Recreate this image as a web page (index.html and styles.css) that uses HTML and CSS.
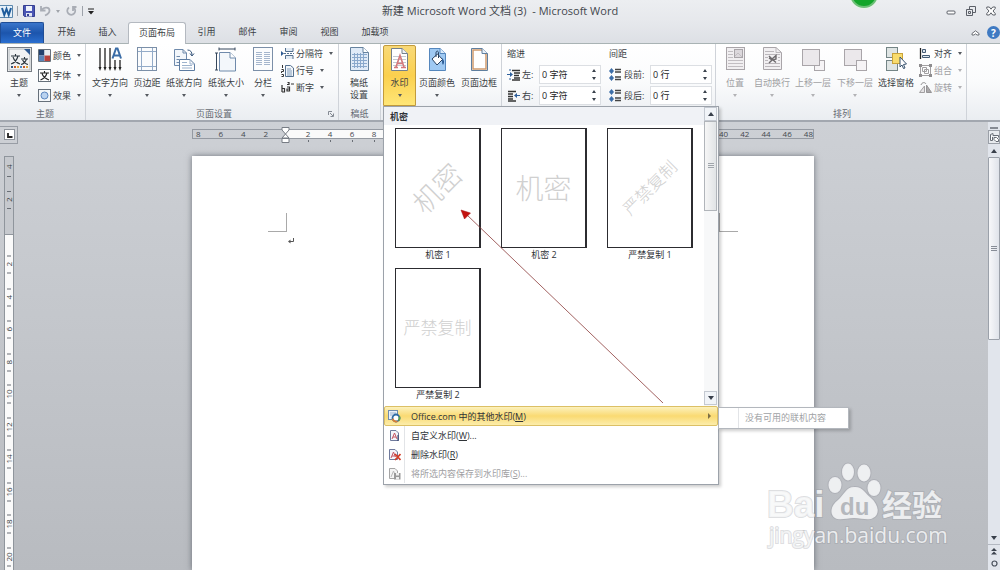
FILE: index.html
```html
<!DOCTYPE html>
<html lang="zh-CN">
<head>
<meta charset="utf-8">
<title>新建 Microsoft Word 文档 (3) - Microsoft Word</title>
<link rel="stylesheet" href="styles.css">
</head>
<body>
<header class="titlebar">
  <div class="quick">
    <svg class="logo" width="14" height="15" viewBox="0 0 14 15"><path d="M0 1.500H12.500V13.500H0" fill="#e6f0f9" stroke="#5b87ad"/><path d="M2 4L4.300 11L6.500 5L8.700 11L11 4" fill="none" stroke="#1f5c9c" stroke-width="2"/></svg>
    <i class="sep"></i>
    <button class="flat" aria-label="保存"><svg width="12" height="12" viewBox="0 0 12 12"><path d="M.5.5H11.500V11.500H1.500L.5 10.500Z" fill="#4a55b4" stroke="#353f91"/><path d="M3 1H9V6H3Z" fill="#eef2fb"/><path d="M3 8H9V11.500H3Z" fill="#dfe4f3"/><path d="M4 9H6V11H4Z" fill="#353f91"/></svg></button>
    <button class="flat" aria-label="撤消"><svg width="11" height="12" viewBox="0 0 11 12"><path d="M1 1V5.500H5.500M1.500 5C4 1.500 9.500 2 9.500 5.500C9.500 8 7.500 9.500 5 10.500" fill="none" stroke="#a9adb5" stroke-width="1.800"/></svg></button>
    <i class="caret dim"></i>
    <button class="flat" aria-label="恢复"><svg width="12" height="12" viewBox="0 0 12 12"><path d="M4 2.500A4 4 0 1 0 8.500 2.500M8 6V2H11.500" fill="none" stroke="#a9adb5" stroke-width="1.800"/></svg></button>
    <i class="sep"></i>
    <button class="flat" aria-label="自定义快速访问工具栏"><svg width="6" height="7" viewBox="0 0 6 7"><path d="M0 1H6" stroke="#222"/><path d="M0 3H6L3 6.500Z" fill="#222"/></svg></button>
  </div>
  <h1 class="title">新建 Microsoft Word 文档 (3) &nbsp;- Microsoft Word</h1>
  <i class="orb"></i>
  <div class="winctl">
    <button class="flat" aria-label="最小化"><svg width="10" height="10" viewBox="0 0 10 10"><rect x="1" y="5" width="8" height="3" rx="1" fill="#fff" stroke="#5c6068"/></svg></button>
    <button class="flat" aria-label="还原"><svg width="10" height="10" viewBox="0 0 10 10"><path d="M3.500 3V.5H9.500V6.500H7M.5 3.500H6.500V9.500H.5ZM2.500 5.500H4.500V7.500H2.500Z" fill="none" stroke="#5c6068"/></svg></button>
    <button class="flat" aria-label="关闭"><svg width="10" height="10" viewBox="0 0 10 10"><path d="M.8 1H3.300L5 3.200L6.700 1H9.200V2.500L7 5L9.200 7.500V9H6.700L5 6.800L3.300 9H.8V7.500L3 5L.8 2.500Z" fill="#fff" stroke="#5c6068"/></svg></button>
  </div>
</header>
<nav class="tabs">
  <button class="tab file">文件</button>
  <button class="tab">开始</button>
  <button class="tab">插入</button>
  <button class="tab active">页面布局</button>
  <button class="tab">引用</button>
  <button class="tab">邮件</button>
  <button class="tab">审阅</button>
  <button class="tab">视图</button>
  <button class="tab wide">加载项</button>
  <div class="tabtools">
    <button class="flat" aria-label="功能区最小化"><svg width="9" height="6" viewBox="0 0 9 6"><path d="M1 3.500L4.500 .8L8 3.500V5H6L4.500 3.800L3 5H1Z" fill="#fff" stroke="#5c6068" stroke-width=".9"/></svg></button>
    <button class="flat help" aria-label="帮助">?</button>
  </div>
</nav>

<div class="ribbon">
  <section class="group g-theme">
    <div class="tools">
      <button class="big narrow"><svg width="25" height="25" viewBox="0 0 25 25"><rect x=".5" y=".5" width="24" height="24" fill="#fff" stroke="#777d84"/><rect x="2" y="2" width="21" height="21" fill="#f1f3f4" stroke="#b2b7bb"/><path d="M17 2H23V8Z" fill="#2f5b93"/><path d="M4 9H13M8.500 7V9M11 9C10 13 7 16 4 17M6 10C7 13 10 16 13 17M14 12H21M17.500 10V12M19.500 12C18.500 15 16.500 17 14 17.500M15.500 13C17 15.500 18.500 17 21 17.500" fill="none" stroke="#29343c" stroke-width="1.100"/><path d="M4 20H6" stroke="#33557a" stroke-width="2"/><path d="M7 20H9M16 20H18" stroke="#c55a2b" stroke-width="2"/><path d="M10 20H12M19 20H21" stroke="#e0a43b" stroke-width="2"/><path d="M13 20H15" stroke="#4f87bd" stroke-width="2"/></svg><span>主题</span><i class="caret"></i></button>
      <div class="smalls loose">
        <button class="small"><svg width="13" height="13" viewBox="0 0 13 13"><path d="M.5 .5H12.500V12.500H.5Z" fill="#fff" stroke="#66707a"/><path d="M1 1H6.500V6.500H1Z" fill="#24416d"/><path d="M6.500 1H12V6.500H6.500Z" fill="#e8ebef"/><path d="M1 6.500H6.500V12H1Z" fill="#5a83b8"/><path d="M6.500 6.500H12V12H6.500Z" fill="#b8423c"/></svg><span>颜色</span><i class="caret"></i></button>
        <button class="small"><svg width="13" height="13" viewBox="0 0 13 13"><rect x=".5" y=".5" width="12" height="12" fill="#fff" stroke="#66707a"/><path d="M2 4H11M6.500 2V4M9 4C8 7.500 6 9.500 2.500 11M4 4.500C5 7.500 7 9.500 11 11" fill="none" stroke="#222" stroke-width="1.100"/></svg><span>字体</span><i class="caret"></i></button>
        <button class="small"><svg width="13" height="13" viewBox="0 0 13 13"><rect x=".5" y=".5" width="12" height="12" fill="#f4f7fa" stroke="#66707a"/><circle cx="6.500" cy="6.500" r="3.500" fill="#b9d2f0" stroke="#5b86bf"/></svg><span>效果</span><i class="caret"></i></button>
      </div>
    </div>
    <h2>主题</h2>
  </section>

  <section class="group g-setup">
    <div class="tools">
      <button class="big"><svg width="24" height="25" viewBox="0 0 24 25"><path d="M2 1V20M7 1V20M12 1V20M17 13V20M22 13V20" stroke="#222" stroke-width="1.300"/><path d="M.5 20H3.500L2 24ZM5.500 20H8.500L7 24ZM10.500 20H13.500L12 24ZM15.500 20H18.500L17 24ZM20.500 20H23.500L22 24Z" fill="#222"/><path d="M14.500 11.500L18 1.500H19.500L23 11.500M15.500 8.500H22" fill="none" stroke="#3a6ca6" stroke-width="2"/></svg><span>文字方向</span><i class="caret"></i></button>
      <button class="big w34"><svg width="20" height="25" viewBox="0 0 20 25"><rect x=".5" y=".5" width="19" height="23" fill="#fbfcfd" stroke="#7b8fa8"/><path d="M4.500 1V23M15.500 1V23M1 4.500H19M1 19.500H19" stroke="#93abc8"/></svg><span>页边距</span><i class="caret"></i></button>
      <button class="big"><svg width="24" height="25" viewBox="0 0 24 25"><path d="M2.500 2.500H11L14.500 6V18.500H2.500Z" fill="#f3f7fb" stroke="#6f8aab"/><path d="M11 2.500V6H14.500M4.500 9.500H8M4.500 12.500H7M4.500 15.500H7" fill="none" stroke="#6f8aab"/><path d="M7.500 12.500H18L22.500 17V23.500H7.500Z" fill="#fff" stroke="#5c7ba0"/><path d="M18 12.500V17H22.500M10 15.500H15M10 18.500H20M10 21H20" fill="none" stroke="#9db3cd"/><path d="M15.500 3C18.500 3 20 5 20 8M18 6.500L20 9L22 6.500" fill="none" stroke="#35547a"/></svg><span>纸张方向</span><i class="caret"></i></button>
      <button class="big w44"><svg width="22" height="25" viewBox="0 0 22 25"><path d="M4.500 5.500H15L20.500 11V24H4.500Z" fill="#f3f7fb" stroke="#6f8aab"/><path d="M15 5.500V11H20.500" fill="#fff" stroke="#6f8aab"/><path d="M4 2H20M4 .5V3.500M20 .5V3.500M1.500 6V23M0 6H3M0 23H3" stroke="#35475c"/></svg><span>纸张大小</span><i class="caret"></i></button>
      <button class="big w30"><svg width="20" height="25" viewBox="0 0 20 25"><rect x=".5" y=".5" width="19" height="23" fill="#fbfcfd" stroke="#7b8fa8"/><path d="M3 5.500H9M11 5.500H17M3 7.500H9M11 7.500H17M3 9.500H9M11 9.500H17M3 11.500H9M11 11.500H17M3 13.500H9M11 13.500H17M3 15.500H9M11 15.500H17M3 17.500H9M11 17.500H17" stroke="#a5b6cd"/></svg><span>分栏</span><i class="caret"></i></button>
      <div class="smalls">
        <button class="small"><svg width="13" height="13" viewBox="0 0 13 13"><path d="M4.500 1V4.500H12V1M4.500 12V8.500H12V12" fill="#e3ebf4" stroke="#54708f"/><path d="M3 6.500H13" stroke="#54708f" stroke-dasharray="2 1"/><path d="M0 4L3 6.500L0 9Z" fill="#2f5b93"/></svg><span>分隔符</span><i class="caret"></i></button>
        <button class="small"><svg width="13" height="13" viewBox="0 0 13 13"><path d="M4.500 1.500H9.500L12.500 4V12.500H4.500Z" fill="#f1f5f9" stroke="#54708f"/><path d="M6 5H10M6 7H11M6 9H11M6 11H11" stroke="#809bb9"/><path d="M1.500 1V4M.5 5.500H2.500V7.500H.5V9M.5 10.500H2.500V12.500H.5" fill="none" stroke="#333"/></svg><span>行号</span><i class="caret"></i></button>
        <button class="small"><svg width="13" height="13" viewBox="0 0 13 13"><path d="M1 4V11M1 7.500H3.500V11H1M6 3.500H8V1.500H6.500M6 6H8.500V10H6V8H8M10 3H13" fill="none" stroke="#333" stroke-width="1.200"/></svg><span>断字</span><i class="caret"></i></button>
      </div>
    </div>
    <h2>页面设置</h2>
    <svg class="launcher" width="6" height="6" viewBox="0 0 6 6"><path d="M.5 4V.5H4M2 2L5 5M5.500 2.500V5.500H2.500" fill="none" stroke="#858b94"/></svg>
  </section>

  <section class="group g-grid">
    <div class="tools">
      <button class="big"><svg width="19" height="25" viewBox="0 0 19 25"><path d="M.5 .5H13L18.500 5.500V23.500H.5Z" fill="#dfeaf7" stroke="#66839f"/><path d="M13 .5V5.500H18.500" fill="#fff" stroke="#66839f"/><path d="M2 7.500H17M2 10.500H17M2 13.500H17M2 16.500H17M2 19.500H17M4.500 6V21M7.500 6V21M10.500 6V21M13.500 6V21" stroke="#89a8cc"/></svg><span>稿纸<br>设置</span></button>
    </div>
    <h2>稿纸</h2>
  </section>

  <section class="group g-bg">
    <div class="tools">
      <div class="wm">
        <button class="big pressed"><svg width="19" height="25" viewBox="0 0 19 25"><path d="M1.500 1.500H12L17.500 6.500V23.500H1.500Z" fill="#fff" stroke="#74808c"/><path d="M12 1.500V6.500H17.500" fill="#eef1f5" stroke="#74808c"/><path d="M3 9.500H16M3 12.500H16M3 15.500H16M3 18.500H16" stroke="#c3cad2"/><path d="M4 20.500H8M11 20.500H16M6 20L10 8.500L14 20M7.500 16.500H13" fill="none" stroke="#d5787c" stroke-width="1.600"/></svg><span>水印</span><i class="caret"></i></button>
        <div class="panel">
          <div class="gallery">
            <div class="gal-main">
              <h3>机密</h3>
              <div class="thumbs">
                <button class="thumb"><span class="sheet"><em class="diag">机密</em></span><span>机密 1</span></button>
                <button class="thumb"><span class="sheet"><em>机密</em></span><span>机密 2</span></button>
                <button class="thumb"><span class="sheet"><em class="diag small-mark">严禁复制</em></span><span>严禁复制 1</span></button>
                <button class="thumb"><span class="sheet"><em class="small-mark">严禁复制</em></span><span>严禁复制 2</span></button>
              </div>
            </div>
            <div class="gal-scroll">
              <button class="sbtn" aria-label="向上"><i class="up"></i></button>
              <div class="sthumb"></div>
              <button class="sbtn end" aria-label="向下"><i class="down"></i></button>
            </div>
          </div>
          <ul class="menu">
            <li class="hot"><button><svg width="13" height="13" viewBox="0 0 13 13"><rect x=".5" y=".5" width="9" height="9" fill="#eaf1f9" stroke="#6e8cae"/><path d="M2 3H8M2 5H5" stroke="#9bb3cf"/><circle cx="8" cy="8" r="3.500" fill="#fff" stroke="#2d6aa3" stroke-width="1.800"/><path d="M4.600 8.800A3.500 3.500 0 0 0 9.500 11.200" fill="none" stroke="#d97f31" stroke-width="1.800"/><path d="M11.200 6.500A3.500 3.500 0 0 1 10.500 10.500" fill="none" stroke="#5d9e4a" stroke-width="1.800"/></svg><span>Office.com 中的其他水印(<u>M</u>)</span><i class="right"></i></button>
              <div class="submenu"><span>没有可用的联机内容</span></div></li>
            <li><button><svg width="13" height="13" viewBox="0 0 13 13"><path d="M2.500 1.500H8L10.500 4V11.500H2.500Z" fill="#f3f4fa" stroke="#6f7a9c"/><path d="M4 10L6.500 4L9 10M5 8H8" fill="none" stroke="#c65563"/><path d="M10 6V12" stroke="#2c3d6b"/></svg><span>自定义水印(<u>W</u>)...</span></button></li>
            <li><button><svg width="13" height="13" viewBox="0 0 13 13"><path d="M1.500 1.500H7L9.500 4V11.500H1.500Z" fill="#f3f4fa" stroke="#6f7a9c"/><path d="M3 10L5.500 4L7.500 9M4 8H7" fill="none" stroke="#c65563"/><path d="M7 6L12.500 12M12.500 6L7 12" stroke="#d23b26" stroke-width="1.700"/></svg><span>删除水印(<u>R</u>)</span></button></li>
            <li><button disabled><svg width="13" height="13" viewBox="0 0 13 13"><path d="M1.500 1.500H7L9.500 4V11.500H1.500Z" fill="#f4f4f4" stroke="#a5a5a5"/><path d="M3 10L5.500 4L7.500 9" fill="none" stroke="#b8b8b8"/><path d="M6 6H12.500V12.500H6Z" fill="#999"/><path d="M8 6H11V8.500H8ZM8 10H11V12.500H8Z" fill="#eee"/></svg><span>将所选内容保存到水印库(<u>S</u>)...</span></button></li>
          </ul>
          <svg class="pointer" width="290" height="300" viewBox="0 0 290 300"><path d="M279 296L82 107" stroke="#8a3a38" stroke-width=".8" fill="none"/><path d="M77 103L86.500 106L80.500 112Z" fill="#c4130f" stroke="#a01010" stroke-width=".5"/></svg>
        </div>
      </div>
      <button class="big"><svg width="19" height="25" viewBox="0 0 19 25"><path d="M1.500 1.500H12L17.500 6.500V23.500H1.500Z" fill="#9fc9f2" stroke="#5587bd"/><path d="M12 1.500V6.500H17.500" fill="#dcecfb" stroke="#5587bd"/><path d="M4 12L9.500 7L14.500 12.500L9 18Z" fill="#fff" stroke="#2a4362"/><path d="M8 10V6C8 3.500 10.500 3.500 10.500 6V11" fill="none" stroke="#2a4362"/><path d="M14 11C16.500 13 16.500 16 15 18C13.500 16 14.500 14 14 11Z" fill="#23548f"/></svg><span>页面颜色</span><i class="caret"></i></button>
      <button class="big w44"><svg width="19" height="25" viewBox="0 0 19 25"><path d="M1.500 1.500H12L17.500 6.500V23.500H1.500Z" fill="#fff" stroke="#5f7f9f"/><path d="M3 3H11.500L16 7.500V22H3Z" fill="#fff" stroke="#cf9b6d" stroke-width="1.500"/><path d="M12 1.500V6.500H17.500" fill="#e8f0f8" stroke="#5f7f9f"/></svg><span>页面边框</span></button>
    </div>
  </section>

  <section class="group g-para">
    <div class="paracol">
      <h4>缩进</h4>
      <div class="field"><svg width="13" height="12" viewBox="0 0 13 12"><path d="M0 5.500H4M3 0V2M3 9V11" stroke="#2d5f9c"/><path d="M3 3L6 5.500L3 8Z" fill="#2d5f9c"/><path d="M5 1.500H13M7 4H13M7 6.500H12M7 9H13M5 11H13" stroke="#333" stroke-width="1.300"/></svg><label for="il">左:</label><span class="spin"><input id="il" value="0 字符"><span class="arrows"><i class="up"></i><i class="down"></i></span></span></div>
      <div class="field"><svg width="13" height="12" viewBox="0 0 13 12"><path d="M13 5.500H9" stroke="#2d5f9c"/><path d="M10 3L7 5.500L10 8Z" fill="#2d5f9c"/><path d="M1 1.500H9M1 4H6M1 6.500H6M1 9H6M1 11H9" stroke="#333" stroke-width="1.300"/></svg><label for="ir">右:</label><span class="spin"><input id="ir" value="0 字符"><span class="arrows"><i class="up"></i><i class="down"></i></span></span></div>
    </div>
    <div class="paracol second">
      <h4>间距</h4>
      <div class="field"><svg width="13" height="13" viewBox="0 0 13 13"><path d="M2.500 0L5 3H0ZM2.500 6L5 3H0ZM2.500 7L5 10H0ZM2.500 13L5 10H0Z" fill="#3d6ea8"/><path d="M6 1.500H12M6 4H12M6 9H12M6 11.500H12" stroke="#444" stroke-width="1.300"/></svg><label for="sb">段前:</label><span class="spin"><input id="sb" value="0 行"><span class="arrows"><i class="up"></i><i class="down"></i></span></span></div>
      <div class="field"><svg width="13" height="13" viewBox="0 0 13 13"><path d="M2.500 0L5 3H0ZM2.500 6L5 3H0ZM2.500 7L5 10H0ZM2.500 13L5 10H0Z" fill="#3d6ea8"/><path d="M6 1.500H12M6 4H12M6 9H12M6 11.500H12" stroke="#444" stroke-width="1.300"/></svg><label for="sa">段后:</label><span class="spin"><input id="sa" value="0 行"><span class="arrows"><i class="up"></i><i class="down"></i></span></span></div>
    </div>
  </section>

  <section class="group g-arrange">
    <div class="tools">
      <button class="big w34" disabled><svg width="19" height="25" viewBox="0 0 19 25"><rect x=".5" y=".5" width="18" height="22" fill="#f1eff1" stroke="#a9a5a9"/><rect x="8.500" y="2.500" width="8" height="8" fill="#dcd8dc" stroke="#a9a5a9"/><path d="M9 9L12 6L16 10M2 4.500H7M2 7.500H7M2 10.500H7M2 13.500H17M2 16.500H17M2 19.500H17" stroke="#c2bec2" fill="none"/></svg><span>位置</span><i class="caret"></i></button>
      <button class="big" disabled><svg width="19" height="25" viewBox="0 0 19 25"><path d="M.5 .5H13L18.500 5.500V22.500H.5Z" fill="#f1eff1" stroke="#a9a5a9"/><path d="M13 .5V5.500H18.500M2 4.500H11M2 7.500H17M2 16.500H17M2 19.500H17M2 10.500H5M2 13.500H5M15 10.500H17M15 13.500H17" fill="none" stroke="#bbb7bb"/><path d="M6 9L9 12L13 8.500V12L10 13L13 15.500M6 16L9 13L6 11" fill="none" stroke="#6d6a6d" stroke-width="1.400"/></svg><span>自动换行</span><i class="caret"></i></button>
      <button class="big w42" disabled><svg width="23" height="25" viewBox="0 0 23 25"><rect x="12.500" y="13.500" width="10" height="10" fill="#f6f4f6" stroke="#a9a5a9"/><rect x=".5" y="2.500" width="17" height="16" fill="#ebe8eb" stroke="#a9a5a9"/></svg><span>上移一层</span><i class="caret"></i></button>
      <button class="big w42" disabled><svg width="23" height="25" viewBox="0 0 23 25"><rect x=".5" y="2.500" width="17" height="16" fill="#ebe8eb" stroke="#a9a5a9"/><rect x="12.500" y="13.500" width="10" height="10" fill="#f6f4f6" stroke="#a9a5a9"/></svg><span>下移一层</span><i class="caret"></i></button>
      <button class="big"><svg width="21" height="25" viewBox="0 0 21 25"><rect x=".5" y=".5" width="11" height="10" fill="#dfe5e4" stroke="#748586"/><rect x=".5" y="13.500" width="11" height="10" fill="#dfe5e4" stroke="#748586"/><rect x="6.500" y="6.500" width="10" height="10" fill="#f8dc6d" stroke="#c9a339"/><path d="M14 10L20.500 17L17.500 17.500L19 21L17.500 21.500L16 18L14 20Z" fill="#fff" stroke="#38536f"/></svg><span>选择窗格</span></button>
      <div class="smalls">
        <button class="small"><svg width="13" height="13" viewBox="0 0 13 13"><path d="M1.500 1V12" stroke="#222" stroke-width="1.300"/><path d="M3.500 2.500H6.500V5.500H3.500ZM3.500 8.500H10.500V10.500H3.500Z" fill="#dce6f0" stroke="#445b74"/></svg><span>对齐</span><i class="caret"></i></button>
        <button class="small" disabled><svg width="13" height="13" viewBox="0 0 13 13"><path d="M1.500 1.500H11.500V11.500H1.500ZM3.500 3.500H7.500V7.500H3.500ZM5.500 5.500H9.500V9.500H5.500Z" fill="none" stroke="#a19fa1"/><path d="M0 0H3V3H0ZM10 0H13V3H10ZM0 10H3V13H0ZM10 10H13V13H10Z" fill="#8f8d8f"/></svg><span>组合</span><i class="caret"></i></button>
        <button class="small" disabled><svg width="13" height="13" viewBox="0 0 13 13"><path d="M.5 11.500H5.500V5Z" fill="#e5e3e5" stroke="#a19fa1"/><path d="M7.500 4L12.500 11.500H7.500Z" fill="#aaa8aa" stroke="#959395"/><path d="M2 4C3 1 6 1 7 3" fill="none" stroke="#8f8d8f"/></svg><span>旋转</span><i class="caret"></i></button>
      </div>
    </div>
    <h2>排列</h2>
  </section>
</div>

<main class="work">
  <div class="leftcol">
    <div class="tabsel"><button aria-label="制表符"><svg width="9" height="9" viewBox="0 0 9 9"><path d="M3 3V7H7.500" fill="none" stroke="#222" stroke-width="1.800"/></svg></button></div>
    <div class="vruler">
      <div class="vdark"><span class="first">4</span><span>2</span></div>
      <div class="vlight"><span>2</span><span>4</span><span>6</span><span>8</span><span>10</span><span>12</span><span>14</span><span>16</span><span>18</span><span>20</span></div>
    </div>
  </div>
  <div class="canvas">
    <div class="hruler">
      <div class="hdark left"><span>8</span><span>6</span><span>4</span><span>2</span></div>
      <div class="hlight">
        <svg class="indent" width="9" height="18" viewBox="0 0 9 18"><path d="M1 1.500H8V4L4.500 8L1 4ZM4.500 8L8 12H1ZM1 12.500H8V16.500H1Z" fill="#fff" stroke="#777c84"/></svg>
        <span>2</span><span>4</span><span>6</span><span>8</span><span>10</span><span>12</span><span>14</span><span>16</span><span>18</span><span>20</span><span>22</span><span>24</span><span>26</span><span>28</span><span>30</span><span>32</span><span>34</span><span>36</span></div>
      <div class="hdark right-end"><span>40</span><span>42</span><span>44</span><span>46</span><span>48</span></div>
    </div>
    <article class="page">
      <i class="corner"></i>
      <svg class="ret" width="6" height="7" viewBox="0 0 6 7"><path d="M5.500 0V3.500H1" fill="none" stroke="#555"/><path d="M0 3.500L2.500 1.500V5.500Z" fill="#555"/></svg>
      <i class="corner rt"></i>
    </article>
  </div>
  <div class="vscroll">
    <i class="split"></i>
    <button class="rtoggle" aria-label="标尺"><svg width="11" height="11" viewBox="0 0 11 11"><path d="M1.500 2.500L4 1.500V3.500H9.500V5.500M1.500 2.500V8.500H3.500V5M5 5.500H7.500L9.500 7.500V9.500H7L5 7.500Z" fill="#fff" stroke="#666c75"/></svg></button>
    <button class="sb" aria-label="向上滚动"><i class="up"></i></button>
    <div class="vthumb"><i></i></div>
    <button class="sb low" aria-label="向下滚动"><i class="down"></i></button>
    <button class="sb line" aria-label="前一页"><svg width="6" height="7" viewBox="0 0 6 7"><path d="M0 3L3 0L6 3ZM0 6.500L3 3.500L6 6.500Z" fill="#3c434e"/></svg></button>
    <button class="sb" aria-label="选择浏览对象"><svg width="7" height="7" viewBox="0 0 7 7"><circle cx="3.500" cy="3.500" r="2.500" fill="none" stroke="#4a515c" stroke-width="1.200"/></svg></button>
  </div>
  <svg class="brand" width="190" height="92" viewBox="0 0 190 92">
    <g class="ink">
      <text class="bai" x="5" y="60">Bai</text>
      <ellipse cx="73" cy="28" rx="6.500" ry="8"/><ellipse cx="86" cy="15" rx="6" ry="8.500"/><ellipse cx="102" cy="16" rx="6.500" ry="8.500"/><ellipse cx="112" cy="31" rx="6.500" ry="8"/>
      <path d="M92 30C100 29 103 36 109 41C117 48 118 58 111 61C106 64 100 61 92 61C84 61 78 64 73 61C67 57 69 48 76 43C82 38 84 30 92 30Z"/>
      <text class="jy" x="120" y="59">经验</text>
      <text class="url" x="7" y="86">jingyan.baidu.com</text>
    </g>
    <text class="du" x="78" y="58">du</text>
  </svg>
</main>
</body>
</html>
```
FILE: styles.css
```css
* { box-sizing: border-box; }
body {
  margin: 0;
  display: flex;
  flex-direction: column;
  overflow: hidden;
  height: 100vh;
  font-family: "Open Sans", "Noto Sans CJK SC", sans-serif;
  font-size: 9px;
  line-height: 12px;
  color: #3b3f45;
  background: #dfe2e7;
}
button, input { font: inherit; color: inherit; }
button { background: none; border: 0; padding: 0; margin: 0; }
svg { display: block; flex: none; }
i { flex: none; }
h1, h2, h3, h4 { margin: 0; font-weight: 400; font-size: inherit; }

.flat { display: flex; align-items: center; justify-content: center; }
.caret, .down, .up, .right { display: block; width: 0; height: 0; }
.caret { border: 2px solid transparent; border-top: 3px solid #565a60; border-bottom: 0; }
.caret.dim { border-top-color: #a0a4aa; }
.up { border: 3px solid transparent; border-top: 0; border-bottom: 4px solid #39404b; }
.down { border: 3px solid transparent; border-bottom: 0; border-top: 4px solid #39404b; }
.right { border: 3px solid transparent; border-right: 0; border-left: 3px solid #7d6f45; }

.titlebar {
  position: relative;
  display: grid;
  grid-template-columns: 1fr auto 1fr;
  align-items: center;
  height: 22px;
  background: linear-gradient(#eceef1, #e6e8ec);
}
.quick { display: flex; align-items: center; gap: 5px; height: 18px; }
.quick .logo { margin-right: -2px; }
.sep { width: 1px; height: 10px; background: #9da2aa; }
.title { font-size: 11px; color: #43474d; white-space: nowrap; }
.orb {
  position: absolute;
  left: 850px;
  top: -20px;
  width: 28px;
  height: 28px;
  border-radius: 50%;
  background: #12a52a;
  border: 2px solid #6cbf77;
  box-shadow: 0 0 0 1px #e8f3e9;
}
.winctl { display: flex; justify-content: flex-end; gap: 10px; padding-right: 4px; }

.tabs {
  display: flex;
  height: 22px;
  background: linear-gradient(#e6e8ec, #dde0e5);
  border-bottom: 1px solid #a9b3b4;
}
.tab { width: 41px; height: 21px; padding-bottom: 1px; font-size: 9px; }
.tab.wide { width: 50px; }
.tab.file {
  width: 44px;
  margin-right: 2px;
  color: #fff;
  background: linear-gradient(#3a75cb, #1c55ac 50%, #2b6fd0);
  border: 1px solid #1f4d96;
  border-bottom: 0;
  border-radius: 2px 2px 0 0;
}
.tab.active {
  width: 58px;
  height: 22px;
  padding-bottom: 2px;
  background: #fff;
  border: 1px solid #b4b9c0;
  border-bottom: 0;
  border-radius: 3px 3px 0 0;
}
.tabtools { margin-left: auto; display: flex; align-items: center; gap: 7px; }
.help {
  width: 13px;
  height: 13px;
  border-radius: 50%;
  background: #3f7ac2;
  color: #fff;
  font-weight: 700;
  font-size: 10px;
}

.ribbon {
  display: flex;
  height: 78px;
  background: linear-gradient(#fff, #fafbfc 50%, #eaedf1);
  border-bottom: 2px solid #a2a7af;
}
.group {
  position: relative;
  display: flex;
  flex-direction: column;
  justify-content: space-between;
  border-right: 1px solid #cfd3d9;
}
.group h2 { text-align: center; color: #666b73; }
.tools { display: flex; }
.big {
  display: flex;
  flex-direction: column;
  align-items: center;
  width: 40px;
  height: 62px;
  padding-top: 3px;
  white-space: nowrap;
}
.big span { margin-top: 5px; }
.big .caret { margin-top: 5px; }
.big.narrow { width: 28px; }
.big.w30 { width: 30px; }
.big.w34 { width: 34px; }
.big.w42 { width: 42px; }
.big.w44 { width: 44px; }
.smalls { display: flex; flex-direction: column; gap: 4px; padding: 3px 0 0 3px; }
.smalls.loose { gap: 7px; padding-top: 5px; padding-left: 5px; }
.small { display: flex; align-items: center; gap: 2px; height: 13px; white-space: nowrap; }
.small .caret { margin-left: 4px; }
button:disabled { color: #a0a0a3; }
button:disabled .caret { border-top-color: #b2b2b5; }
.launcher { position: absolute; right: 4px; bottom: 3px; }

.g-theme { width: 86px; padding-left: 5px; }
.g-setup { width: 253px; padding-left: 4px; }
.g-grid { width: 42px; }
.g-bg { width: 121px; padding-left: 2px; }
.g-para { width: 214px; flex-direction: row; justify-content: flex-start; padding: 4px 0 0 5px; }
.g-arrange { width: 251px; padding-left: 2px; }

.wm { position: relative; width: 33px; margin-top: 1px; }
.wm .pressed {
  width: 33px;
  height: 61px;
  padding-top: 1px;
  background: linear-gradient(#f8d978, #fbd04e 50%, #ffe677);
  border: 1px solid #c29b3c;
  border-radius: 2px 2px 0 0;
}
.wm + .big { margin-left: 1px; }

.paracol { width: 94px; }
.paracol h4 { height: 16px; }
.paracol.second { width: 103px; margin-left: 8px; }
.field { display: flex; align-items: center; height: 21px; gap: 2px; }
.field label { white-space: nowrap; }
.spin {
  display: flex;
  align-items: center;
  width: 62px;
  height: 19px;
  margin-left: auto;
  background: #fff;
  border: 1px solid #dcdfe3;
}
.spin input { flex: 1; min-width: 0; border: 0; padding: 0 2px; background: none; outline: 0; color: #222; }
.arrows { display: flex; flex-direction: column; gap: 5px; padding-right: 4px; }
.arrows .up { border-width: 0 2px 3px; }
.arrows .down { border-width: 3px 2px 0; }

.panel {
  position: absolute;
  z-index: 5;
  left: 0;
  top: 61px;
  width: 336px;
  background: #fff;
  border: 1px solid #9ca2aa;
  box-shadow: 2px 2px 3px rgba(0, 0, 0, .2);
  color: #2f3338;
}
.gallery { display: flex; height: 299px; }
.gal-main { flex: 1; }
.gal-main h3 { height: 18px; line-height: 19px; padding-left: 6px; font-weight: 700; background: #f0f2f6; }
.thumbs { display: grid; grid-template-columns: repeat(3, 86px); column-gap: 20px; row-gap: 5px; padding: 3px 0 0 11px; }
.thumb { display: flex; flex-direction: column; align-items: center; height: 135px; gap: 1px; color: #2f3338; }
.sheet {
  display: flex;
  align-items: center;
  justify-content: center;
  align-self: stretch;
  height: 120px;
  border: 1px solid #2c2c30;
  border-right-width: 2px;
}
.sheet em { font-style: normal; font-size: 28px; line-height: 30px; font-weight: 300; color: #d0d0d0; white-space: nowrap; }
.sheet .small-mark { font-size: 17px; }
.sheet .diag { transform: rotate(-45deg); }
.gal-scroll { width: 14px; display: flex; flex-direction: column; background: #f7f8f9; padding-right: 1px; }
.sbtn { display: flex; align-items: center; justify-content: center; height: 14px; border: 1px solid #c4c9d1; background: #f1f4f8; }
.sbtn.end { margin-top: auto; margin-bottom: 1px; }
.sthumb {
  height: 90px;
  border: 1px solid #b1b5ba;
  background: repeating-linear-gradient(#a0a5ab 0 1px, #eceeef 1px 2px) center / 6px 6px no-repeat, linear-gradient(90deg, #f6f6f6, #e1e4e6);
}
.menu { list-style: none; margin: 0; padding: 0 0 1px; }
.menu li { position: relative; }
.menu button { display: flex; align-items: center; width: 100%; height: 19px; padding-left: 4px; text-align: left; }
.menu svg { margin-right: 3px; }
.menu button span { padding-left: 6px; border-left: 1px solid #e2e4e7; line-height: 19px; flex: 1; }
.menu .hot button {
  background: linear-gradient(#fcf1bd, #fada72 50%, #fcedab);
  border: 1px solid #dcc065;
  border-radius: 2px;
  height: 20px;
  padding-left: 3px;
  padding-right: 6px;
}
.menu .hot button span { border-color: transparent; }
.submenu {
  position: absolute;
  left: 334px;
  top: 1px;
  width: 131px;
  height: 22px;
  padding-left: 19px;
  background: #fff;
  border: 1px solid #b3b7bd;
  box-shadow: 2px 2px 3px rgba(0, 0, 0, .2);
  color: #a0a2a5;
  line-height: 20px;
  white-space: nowrap;
}
.submenu span { display: block; padding-left: 6px; border-left: 1px solid #e2e4e7; }
.pointer { position: absolute; left: 0; top: 0; pointer-events: none; }

.work {
  position: relative;
  flex: 1;
  min-height: 0;
  display: grid;
  grid-template-columns: 18px 1fr 12px;
  overflow: hidden;
  background: linear-gradient(#cdd0d5, #b8bbc0);
}
.leftcol { display: flex; flex-direction: column; overflow: hidden; min-height: 0; }
.tabsel { flex: none; margin-top: 4px; height: 18px; border: 1px solid #989da5; border-left: 0; padding: 2px 0 0 4px; }
.tabsel button { display: block; border: 1px solid #8f949c; background: #fff; }
.vruler { flex: none; margin: 12px 4px 0; border: 1px solid #8f959c; background: #fafafa; font-size: 8px; line-height: 8px; }
.vruler span {
  display: flex;
  flex: 1;
  justify-content: space-between;
  align-items: center;
  padding: 7px 0;
  writing-mode: vertical-rl;
  transform: rotate(180deg);
}
.vruler span::before, .vruler span::after { content: ""; width: 4px; height: 1px; background: #6a6f76; }
.vdark { display: flex; flex-direction: column; height: 78px; padding-bottom: 19px; background: #c6c9ce; border-bottom: 1px solid #8f959c; }
.vdark span { flex: none; height: 32px; }
.vdark .first { height: 27px; }
.vdark .first::after { display: none; }
.vlight { display: flex; flex-direction: column; height: 338px; padding-top: 13px; }

.canvas { display: flex; flex-direction: column; align-items: center; min-height: 0; }
.hruler { flex: none; display: flex; width: 622px; height: 10px; margin-top: 7px; border: 1px solid #959aa2; font-size: 8px; line-height: 8px; color: #44484e; }
.hdark { display: flex; justify-content: space-between; }
.hdark.left { width: 93px; padding: 0 18px 0 3px; }
.hdark.right-end { flex: 1; }
.hlight { position: relative; flex: none; display: flex; width: 433px; padding-left: 11px; background: #fafafa; }
.hlight span { flex: none; width: 22px; text-align: center; }
.hlight span::after { content: ""; display: block; width: 1px; height: 2px; margin: 2px auto 0; background: #6a6f76; }
.indent { position: absolute; left: -5px; top: -4px; }
.page {
  position: relative;
  flex: 1;
  display: flex;
  width: 622px;
  margin-top: 17px;
  padding: 57px 76px 0;
  background: #fff;
  box-shadow: 0 0 6px rgba(50, 55, 65, .6);
}
.corner { width: 19px; height: 19px; border: solid #a9a9a9; border-width: 0 1px 1px 0; }
.corner.rt { margin-left: auto; border-width: 0 0 1px 1px; }
.ret { margin: 25px 0 0 1px; }

.vscroll { display: flex; flex-direction: column; align-items: stretch; background: #e1e5ec; padding-top: 5px; }
.split { height: 2px; margin: 0 2px 1px; background: #858a93; }
.rtoggle { height: 14px; border: 1px solid #9ba0a8; background: #e8ebef; }
.sb { display: flex; align-items: center; justify-content: center; height: 13px; }
.vthumb { height: 183px; border: 1px solid #9ba1aa; border-radius: 1px; background: linear-gradient(90deg, #f7f8fa, #dfe3ea); display: flex; align-items: center; justify-content: center; }
.vthumb i { width: 6px; height: 6px; background: repeating-linear-gradient(#878d97 0 1px, transparent 1px 2px); }
.low { margin-top: auto; }
.line { border-top: 1px solid #b3b8c1; }

.brand { position: absolute; right: 48px; bottom: 21px; }
.ink { fill: #f7f8f9; fill-opacity: .85; stroke: #8d9097; stroke-opacity: .3; stroke-width: 2px; paint-order: stroke; }
.bai { font: 700 37px "Liberation Sans", sans-serif; }
.jy { font: 700 30px "Noto Sans CJK SC", sans-serif; }
.url { font: 400 21px "Open Sans", sans-serif; }
.du { font: 700 24px "Liberation Sans", sans-serif; fill: #b5b8bd; }
```
